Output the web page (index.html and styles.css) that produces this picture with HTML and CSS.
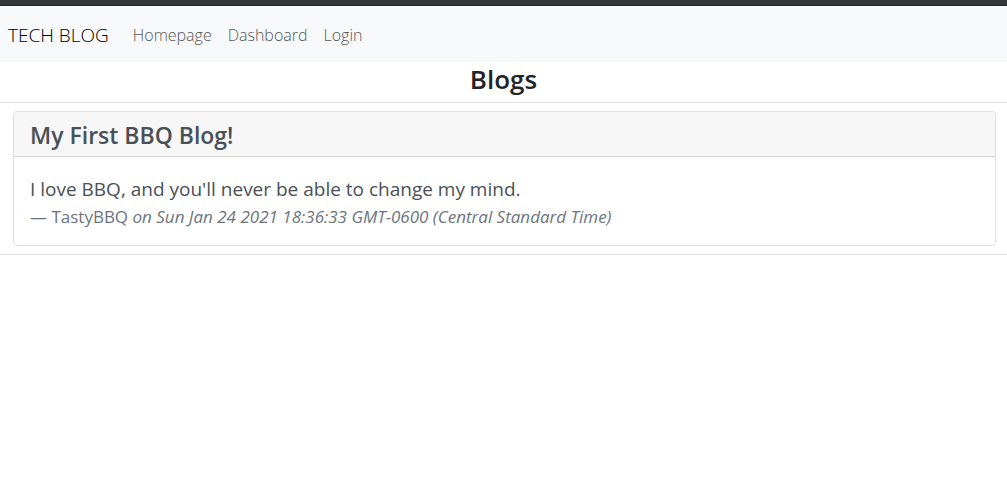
FILE: index.html
```html
<!DOCTYPE html>
<html lang="en">
<head>
<meta charset="utf-8">
<title>Tech Blog</title>
<link rel="stylesheet" href="styles.css">
</head>
<body>
<div class="top-strip"></div>
<nav class="navbar">
  <a class="brand" href="#">TECH BLOG</a>
  <a class="nav-link" href="#">Homepage</a>
  <a class="nav-link" href="#">Dashboard</a>
  <a class="nav-link" href="#">Login</a>
</nav>
<main>
  <h1 class="page-title">Blogs</h1>
  <section class="posts">
    <article class="card">
      <h2 class="card-header">My First BBQ Blog!</h2>
      <blockquote class="card-body">
        <p class="quote">I love BBQ, and you'll never be able to change my mind.</p>
        <footer class="byline">— TastyBBQ <cite>on Sun Jan 24 2021 18:36:33 GMT-0600 (Central Standard Time)</cite></footer>
      </blockquote>
    </article>
  </section>
</main>
</body>
</html>
```
FILE: styles.css
```css
* { box-sizing: border-box; }
body {
  margin: 0;
  background: #fff;
  color: #212529;
  font-family: "Segoe UI", "Open Sans", "Noto Sans", sans-serif;
  font-size: 16px;
  line-height: 24px;
}
.top-strip {
  height: 6px;
  border-bottom: 1px solid #292528;
  background: #35363a;
}
.navbar {
  display: flex;
  align-items: center;
  padding: 13px 8px 11px;
  background: #f8f9fa;
  font-weight: 300;
}
.brand {
  margin-right: 16px;
  color: #000;
  font-size: 19px;
  line-height: 32px;
  text-decoration: none;
}
.nav-link {
  padding: 0 8px;
  color: #555658;
  text-decoration: none;
}
.page-title {
  margin: 0;
  padding-bottom: 6px;
  font-size: 26px;
  font-weight: 600;
  line-height: 34px;
  text-align: center;
}
.posts {
  padding: 8px 11px 8px 13px;
  border-top: 1px solid #dfdfdf;
  border-bottom: 1px solid #dfdfdf;
}
.card {
  border: 1px solid #dfdfdf;
  border-radius: 4px;
  color: #495057;
}
.card-header {
  margin: 0;
  padding: 9px 16px 7px;
  border-bottom: 1px solid #d5d5d5;
  border-radius: 3px 3px 0 0;
  background: #f7f7f7;
  font-size: 23px;
  font-weight: 600;
  line-height: 28px;
}
.card-body {
  margin: 0;
  padding: 17px 16px 15px;
}
.quote {
  margin: 0;
  font-size: 19px;
  line-height: 30px;
}
.byline {
  color: #6c757d;
  font-size: 17px;
  line-height: 26px;
}
```
